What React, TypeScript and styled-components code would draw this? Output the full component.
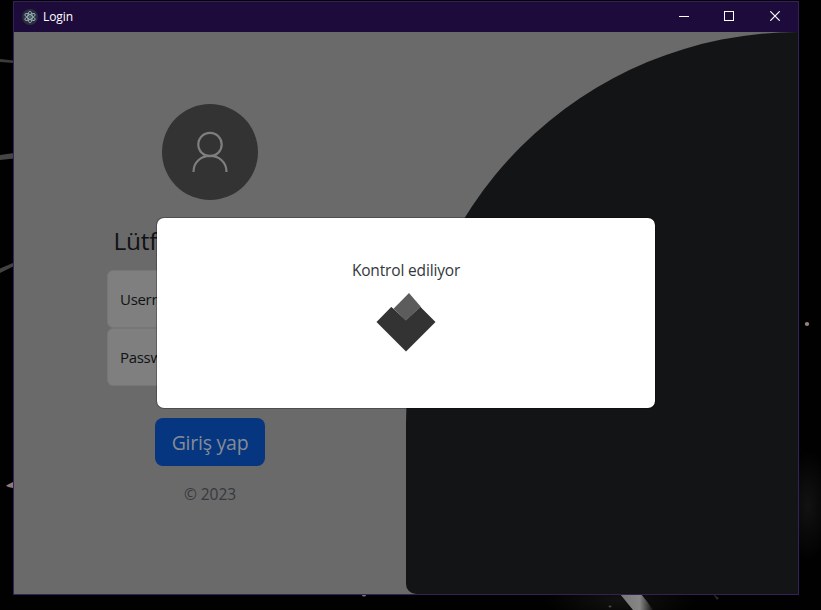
import React from "react";
import styled, { createGlobalStyle } from "styled-components";

const GlobalStyle = createGlobalStyle`
  *, *::before, *::after { box-sizing: border-box; }
  body { margin: 0; background: #000; overflow: hidden; }
`;

const Desktop = styled.div`
  position: relative;
  width: 821px;
  height: 610px;
  padding: 1px 22px 15px 13px;
  overflow: hidden;
  background: #010101;
  font-family: "Open Sans", "Noto Sans", sans-serif;
`;

const Wallpaper = styled.svg`
  position: absolute;
  inset: 0;
`;

const Window = styled.div`
  position: relative;
  display: flex;
  flex-direction: column;
  width: 786px;
  height: 594px;
  border: 1px solid #35205a;
`;

const TitleBar = styled.header`
  display: flex;
  align-items: center;
  height: 30px;
  flex: none;
  padding-left: 8px;
  background: #1d0c3b;
  color: #fff;
`;

const Title = styled.span`
  flex: 1;
  margin-left: 5px;
  font-size: 12px;
  line-height: 16px;
  letter-spacing: -0.1px;
`;

const WindowButton = styled.button<{ $width: number }>`
  display: grid;
  place-items: center;
  width: ${(p) => p.$width}px;
  height: 30px;
  padding: 0 0 2px;
  border: 0;
  background: none;
  color: #fff;
`;

const Content = styled.main`
  position: relative;
  display: grid;
  grid-template-columns: 1fr 1fr;
  flex: 1;
  background: #6a6a6a;
`;

const LoginPane = styled.form`
  display: flex;
  flex-direction: column;
  align-items: center;
  padding-top: 72px;
`;

const DarkPane = styled.div`
  background: #131416;
  border-radius: 392px 0 0 10px;
`;

const Avatar = styled.div`
  display: grid;
  place-items: center;
  width: 96px;
  height: 96px;
  border-radius: 50%;
  background: #333;
`;

const Heading = styled.h1`
  width: 193px;
  margin: 25px 0 13px;
  font-size: 24.5px;
  line-height: 32px;
  font-weight: 400;
  letter-spacing: -0.3px;
  white-space: nowrap;
  color: #101214;
`;

const Field = styled.label`
  display: flex;
  align-items: center;
  width: 206px;
  height: 58px;
  padding-left: 12px;
  border: 1px solid #747678;
  border-radius: 6px;
  background: #7f7f7f;
  color: #101214;
  font-size: 15px;
  letter-spacing: -0.3px;
`;

const SubmitButton = styled.button`
  width: 110px;
  height: 48px;
  margin-top: 32px;
  padding: 2px 0 0;
  border: 0;
  border-radius: 8px;
  background: #06367f;
  color: #858c96;
  font: 400 19.5px/30px "Open Sans", "Noto Sans", sans-serif;
  letter-spacing: -0.25px;
  white-space: nowrap;
`;

const Copyright = styled.p`
  margin: 16px 0 0;
  font-size: 15.5px;
  line-height: 24px;
  letter-spacing: -0.05px;
  color: #36393d;
`;

const Modal = styled.section`
  position: absolute;
  top: 185px;
  left: 142px;
  display: flex;
  flex-direction: column;
  align-items: center;
  width: 500px;
  height: 192px;
  padding-top: 40px;
  border: 1px solid rgba(0, 0, 0, 0.25);
  border-radius: 8px;
  background: #fff;
  background-clip: padding-box;
`;

const Message = styled.p`
  margin: 0;
  font-size: 15.5px;
  line-height: 24px;
  letter-spacing: -0.16px;
  color: #33373b;
`;

const Loader = styled.svg`
  margin-top: 10px;
`;

const ElectronIcon = () => (
  <svg width="16" height="16" viewBox="0 0 16 16">
    <circle cx="8" cy="8" r="8" fill="#2b2e3b" />
    <g fill="none" stroke="#a7c5cf" strokeWidth="0.8">
      <ellipse cx="8" cy="8" rx="5.8" ry="2.2" transform="rotate(30 8 8)" />
      <ellipse cx="8" cy="8" rx="5.8" ry="2.2" transform="rotate(90 8 8)" />
      <ellipse cx="8" cy="8" rx="5.8" ry="2.2" transform="rotate(150 8 8)" />
    </g>
    <circle cx="8" cy="8" r="0.7" fill="#a7c5cf" />
  </svg>
);

const fields = ["Username", "Password"];

export default function App() {
  return (
    <>
      <GlobalStyle />
      <Desktop>
        <Wallpaper width="821" height="610" viewBox="0 0 821 610">
          <defs>
            <linearGradient id="beam" x1="0" x2="1">
              <stop offset="0" stopColor="#777" />
              <stop offset="0.6" stopColor="#868686" />
              <stop offset="1" stopColor="#111" />
            </linearGradient>
            <radialGradient id="haze">
              <stop offset="0" stopColor="#121212" />
              <stop offset="1" stopColor="#010101" />
            </radialGradient>
          </defs>
          <ellipse cx="620" cy="600" rx="75" ry="24" fill="url(#haze)" />
          <ellipse cx="808" cy="505" rx="25" ry="55" fill="url(#haze)" />
          <path d="M0 59L14 60.500V63L0 62Z" fill="#3b3b3b" />
          <path d="M0 155L14 153V158.500L0 160Z" fill="#454545" />
          <path d="M0 268.500L14 262.500V266L0 273Z" fill="#424242" />
          <path d="M6 485.500L11 483L13 482V488L8 487Z" fill="#8b7a7a" />
          <path d="M620 594H641Q648 602 653 610H633Z" fill="url(#beam)" />
          <path d="M713 594L719 598L717 600Z" fill="#292929" />
          <ellipse cx="610" cy="606.500" rx="1.500" ry="1" fill="#4a4a40" />
          <ellipse cx="364" cy="595.500" rx="2" ry="1" fill="#777" />
          <ellipse cx="807" cy="324" rx="2.200" ry="1.900" fill="#91847f" />
        </Wallpaper>
        <Window>
          <TitleBar>
            <ElectronIcon />
            <Title>Login</Title>
            <WindowButton type="button" aria-label="Minimize" $width={45}>
              <svg width="10" height="10"><path d="M0 5.500H10" stroke="currentColor" /></svg>
            </WindowButton>
            <WindowButton type="button" aria-label="Maximize" $width={46}>
              <svg width="10" height="10"><rect x="0.500" y="0.500" width="9" height="9" fill="none" stroke="currentColor" /></svg>
            </WindowButton>
            <WindowButton type="button" aria-label="Close" $width={46}>
              <svg width="10" height="10"><path d="M0.300 0.300L9.700 9.700M9.700 0.300L0.300 9.700" stroke="currentColor" strokeWidth="1.150" /></svg>
            </WindowButton>
          </TitleBar>
          <Content>
            <LoginPane>
              <Avatar>
                <svg width="96" height="96" viewBox="0 0 96 96" fill="none" stroke="#7f7f7f" strokeWidth="2.2">
                  <circle cx="48" cy="40.500" r="11.700" />
                  <path d="M31.500 68C31.500 46.600 64.500 46.600 64.500 68" />
                </svg>
              </Avatar>
              <Heading>Lütfen giriş yapın</Heading>
              {fields.map((name) => (
                <Field key={name}>{name}</Field>
              ))}
              <SubmitButton type="button">Giriş yap</SubmitButton>
              <Copyright>© 2023</Copyright>
            </LoginPane>
            <DarkPane />
            <Modal role="dialog">
              <Message>Kontrol ediliyor</Message>
              <Loader width="60" height="60" viewBox="0 0 60 60">
                <path d="M0.500 30L15.200 15L30 28.500L44.500 15L59.500 30L30 59.500Z" fill="#333" />
                <path d="M17.500 16.800L33 1L44.800 14.800L29.700 28.700Z" fill="#5c5c5c" />
                <path d="M15.200 15L29.800 28.700L44.500 15L46 17L30 32L15 17Z" fill="#333" />
              </Loader>
            </Modal>
          </Content>
        </Window>
      </Desktop>
    </>
  );
}
